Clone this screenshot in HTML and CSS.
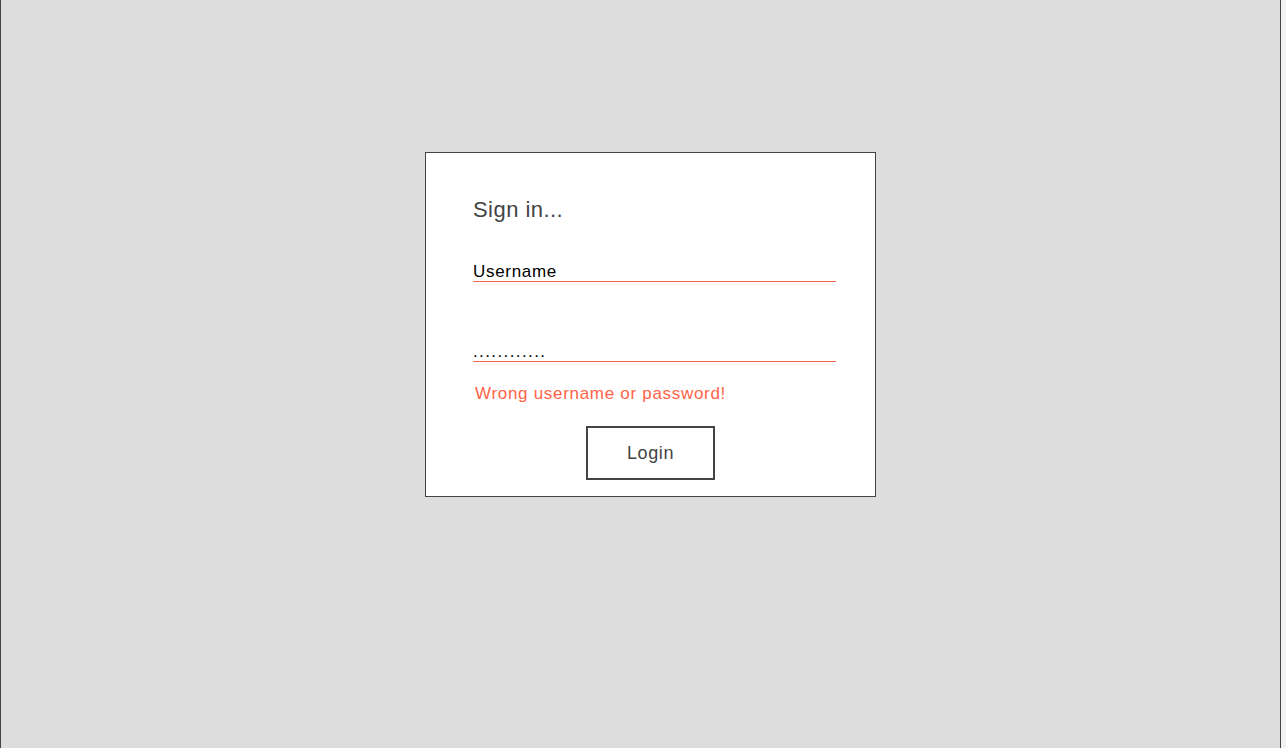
FILE: index.html
```html
<!DOCTYPE html>
<html lang="en">
<head>
<meta charset="utf-8">
<title>Sign in</title>
<link rel="stylesheet" href="styles.css">
</head>
<body>
<div class="frame">
  <form class="card">
    <h1 class="title">Sign in...</h1>
    <div class="field field-user">Username</div>
    <div class="field field-pass">............</div>
    <div class="error">Wrong username or password!</div>
    <button type="button" class="btn">Login</button>
  </form>
</div>
</body>
</html>
```

FILE: styles.css
```css
html {
  background: #f2f2f2;
}
body {
  margin: 0;
  font-family: "Liberation Sans", Arial, sans-serif;
}
.frame {
  box-sizing: border-box;
  width: 1281px;
  height: 748px;
  background: #dddddd;
  border-left: 1px solid #444444;
  border-right: 1px solid #444444;
  padding: 152px 0 0 424px;
}
.card {
  box-sizing: border-box;
  width: 451px;
  height: 345px;
  background: #ffffff;
  border: 1px solid #444444;
  padding-top: 44px;
  display: flex;
  flex-direction: column;
  margin: 0;
}
.title {
  margin: 0 0 0 47px;
  font-size: 22px;
  line-height: 26px;
  font-weight: normal;
  color: #444444;
  letter-spacing: 0.45px;
}
.field {
  margin-left: 47px;
  width: 363px;
  font-size: 17px;
  line-height: 19px;
  color: #000000;
  border-bottom: 1px solid #f26449;
  letter-spacing: 0.7px;
}
.field-user {
  margin-top: 38px;
  padding-top: 1px;
}
.field-pass {
  margin-top: 60px;
  letter-spacing: 1.4px;
}
.error {
  margin: 22px 0 0 49px;
  font-size: 17px;
  line-height: 19px;
  color: #ff6347;
  letter-spacing: 0.7px;
}
.btn {
  align-self: center;
  margin-top: 23px;
  box-sizing: border-box;
  width: 129px;
  height: 54px;
  border: 2px solid #444444;
  background: #ffffff;
  color: #444444;
  font-family: "Liberation Sans", Arial, sans-serif;
  font-size: 18px;
  letter-spacing: 0.6px;
  padding: 0;
}
```
